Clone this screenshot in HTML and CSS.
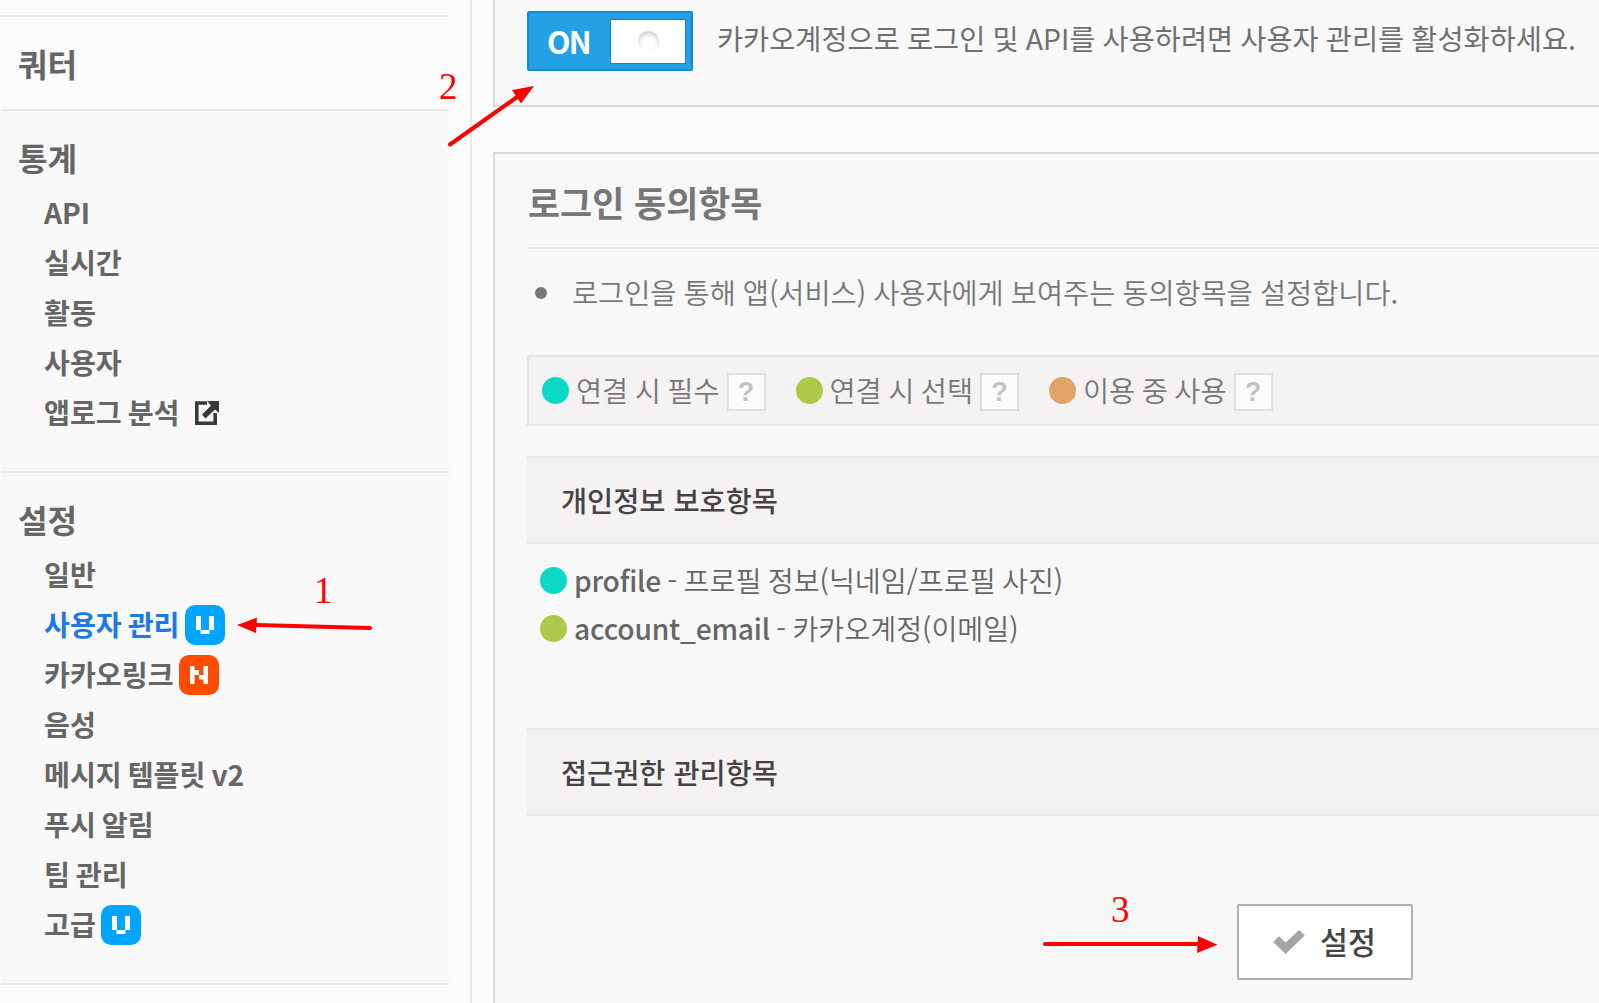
FILE: index.html
```html
<!DOCTYPE html>
<html lang="ko">
<head>
<meta charset="utf-8">
<title>설정 - 사용자 관리</title>
<link rel="stylesheet" href="styles.css">
</head>
<body>
<div class="app">
  <nav class="sidebar">
    <section class="group group-first"></section>
    <section class="group group-plain"><h2>쿼터</h2></section>
    <section class="group group-stats">
      <h2>통계</h2>
      <ul>
        <li>API</li>
        <li>실시간</li>
        <li>활동</li>
        <li>사용자</li>
        <li>앱로그 분석
          <svg class="external" width="24" height="24" viewBox="0 0 24 24"><path d="M12 2H1.800v20.200h18.400V12" fill="none" stroke="#3a3a3a" stroke-width="3.600"/><path d="M12 0h12v12l-4-3.500-9.500 9L7 13.500 16 4.500z" fill="#3a3a3a"/></svg>
        </li>
      </ul>
    </section>
    <section class="group group-settings">
      <h2>설정</h2>
      <ul>
        <li>일반</li>
        <li class="active">사용자 관리<svg class="badge" width="40" height="40" viewBox="0 0 40 40"><rect width="40" height="40" rx="10" fill="#00a5ff"/><path d="M11 11h5v14h8V11h5v14h-4.500v4h-9v-4H11z" fill="#fff"/></svg></li>
        <li>카카오링크<svg class="badge" width="40" height="40" viewBox="0 0 40 40"><rect width="40" height="40" rx="10" fill="#ff4b00"/><path d="M11 11h4.500v4h4.500v5h4.500v-9h4.500v18h-4.500v-4.500H20V20h-4.500v9H11z" fill="#fff"/></svg></li>
        <li>음성</li>
        <li>메시지 템플릿 v2</li>
        <li>푸시 알림</li>
        <li>팀 관리</li>
        <li>고급<svg class="badge" width="40" height="40" viewBox="0 0 40 40"><rect width="40" height="40" rx="10" fill="#00a5ff"/><path d="M11 11h5v14h8V11h5v14h-4.500v4h-9v-4H11z" fill="#fff"/></svg></li>
      </ul>
    </section>
  </nav>
  <main class="content">
    <section class="panel panel-toggle">
      <div class="toggle"><span class="toggle-label">ON</span><span class="knob"><i></i></span></div>
      <p class="toggle-text">카카오계정으로 로그인 및 API를 사용하려면 사용자 관리를 활성화하세요.</p>
    </section>
    <section class="panel panel-consent">
      <h1>로그인 동의항목</h1>
      <p class="note">로그인을 통해 앱(서비스) 사용자에게 보여주는 동의항목을 설정합니다.</p>
      <div class="legend">
        <div class="legend-item"><i class="dot cyan"></i><span>연결 시 필수</span><b class="help">?</b></div>
        <div class="legend-item"><i class="dot green"></i><span>연결 시 선택</span><b class="help">?</b></div>
        <div class="legend-item"><i class="dot orange"></i><span>이용 중 사용</span><b class="help">?</b></div>
      </div>
      <h3>개인정보 보호항목</h3>
      <ul class="scopes">
        <li><i class="dot cyan"></i><span><strong>profile</strong> - 프로필 정보(닉네임/프로필 사진)</span></li>
        <li><i class="dot green"></i><span><strong>account_email</strong> - 카카오계정(이메일)</span></li>
      </ul>
      <h3>접근권한 관리항목</h3>
      <button class="submit" type="button"><svg width="32" height="24" viewBox="0 0 33 25"><path d="M0 12.500 6 6.500 13 13 27 0l6 5.500L13 25z" fill="#a5a5a5"/></svg><span>설정</span></button>
    </section>
  </main>
  <svg class="marks" width="1599" height="1003" viewBox="0 0 1599 1003">
    <g stroke="#f00" stroke-width="4" stroke-linecap="round">
      <path d="M370 628 256 625M450 144.500 520 95M1045 944h153"/>
    </g>
    <path d="M237 625l20-7.500-1 15.500zM534 86l-22 4 9 13.500zM1217.500 944.700l-19.500-8.700-1 17z" fill="#f00"/>
    <g class="mark-text"><text x="314" y="603">1</text><text x="439" y="99">2</text><text x="1111" y="922">3</text></g>
  </svg>
</div>
</body>
</html>
```
FILE: styles.css
```css
* { box-sizing: border-box; margin: 0; padding: 0; }
body { background: #fcfcfc; font-family: "Noto Sans CJK KR", sans-serif; color: #666; overflow: hidden; }
ul { list-style: none; }
.app { position: relative; display: flex; width: 1599px; height: 1003px; overflow: hidden; }

.sidebar { width: 472px; padding-left: 1px; border-right: 2px solid #e9e9e9; flex: none; }
.group { width: 448px; border-bottom: 2px solid #e8e8e8; background: #f9f9f9; padding-left: 17px; }
.group-first { height: 17px; background: #fcfcfc; }
.group-plain { height: 94px; background: #fcfcfc; padding-top: 21px; }
.group-stats { height: 362px; padding-top: 21px; }
.group-settings { height: 512px; padding-top: 21px; }
.group h2 { font-size: 32.2px; line-height: 50px; font-weight: 700; height: 55px; }
.group li { display: flex; align-items: center; height: 50px; padding-left: 26px; font-size: 28.2px; font-weight: 700; line-height: 50px; white-space: nowrap; word-spacing: -2px; }
.group .active { color: #1e78e6; }
.badge { margin: 2px 0 0 5px; }
.external { margin: 2px 0 0 15px; }

.content { flex: 1; padding-left: 21px; min-width: 0; }
.panel { border: 2px solid #d9d9d9; border-right: 0; background: #f9f9f9; padding-left: 32px; }
.panel-toggle { height: 107px; border-top: 0; display: flex; padding-top: 11px; }
.toggle { width: 166px; height: 60px; border: 2px solid #098fd8; border-radius: 2px; background: #23a1e4; display: flex; align-items: center; justify-content: space-between; padding: 0 5px 0 18px; flex: none; }
.toggle-label { color: #fff; font: 700 30.500px/56px "Noto Sans CJK KR", sans-serif; letter-spacing: -1.800px; }
.knob { width: 76px; height: 45px; border: 1px solid #1186c9; background: #fff; display: flex; align-items: center; justify-content: center; }
.knob i { width: 21px; height: 21px; border-radius: 50%; box-shadow: inset 0 3px 4px #ccc; }
.toggle-text { margin-left: 24px; font-size: 28.4px; line-height: 54px; color: #707070; white-space: nowrap; word-spacing: -.8px; }

.panel-consent { height: 900px; margin-top: 45px; background: #f8f8f8; }
h1 { height: 95px; padding-left: 1px; border-bottom: 2px solid #e5e5e5; color: #777; font-size: 34.9px; line-height: 97px; font-weight: 700; }
.note { display: flex; align-items: center; height: 85px; margin-bottom: 21px; font-size: 28.4px; font-weight: 350; color: #777; white-space: nowrap; word-spacing: -.9px; }
.note::before { content: ""; width: 12px; height: 12px; border-radius: 50%; background: #777; margin: 2px 25px 0 8px; }
.legend { height: 71px; border: 2px solid #e6e5e5; border-right: 0; background: #f4f2f3; display: flex; align-items: center; padding-left: 13px; color: #777; }
.legend-item { display: flex; align-items: center; width: 253.500px; font-size: 28.4px; line-height: 58px; height: 60px; font-weight: 350; white-space: nowrap; word-spacing: -1.500px; }
.legend-item span { margin-top: -2px; }
.dot { width: 27px; height: 27px; border-radius: 50%; margin-right: 7px; flex: none; }
.cyan { background: #0ad9c8; }
.green { background: #aec949; }
.orange { background: #e0a566; }
.help { width: 39px; height: 38px; border: 2px solid #dedede; background: #fcfcfc; color: #c2c2c2; font: 700 27px/35px "Liberation Sans", sans-serif; text-align: center; margin: 3px 0 0 7px; }
h3 { height: 88px; margin-top: 30px; border: solid #e6e5e5; border-width: 2px 0; background: #f4f2f3; color: #444; font-size: 28.4px; line-height: 83px; font-weight: 500; padding-left: 34px; }
.scopes { height: 184px; padding: 13px 0 0 13px; }
.scopes + h3 { margin-top: 0; }
.scopes li { display: flex; align-items: center; height: 48px; font-size: 28.2px; line-height: 44px; font-weight: 350; white-space: nowrap; word-spacing: -1.500px; }
.scopes li span { margin-top: -3px; }
.scopes .dot { margin-top: -1px; }
.scopes strong { font-weight: 500; letter-spacing: -.2px; }
.submit { display: flex; align-items: center; width: 176px; height: 76px; margin: 88px 0 0 710px; border: 2px solid #b0b0b0; border-radius: 2px; background: #fff; padding: 0 0 0 34px; color: #444; font: 500 30.4px/66px "Noto Sans CJK KR", sans-serif; }
.submit span { margin: -3px 0 0 15px; }

.marks { position: absolute; left: 0; top: 0; pointer-events: none; }
.mark-text { font: 37px "Liberation Serif", serif; fill: #f00; }
```
